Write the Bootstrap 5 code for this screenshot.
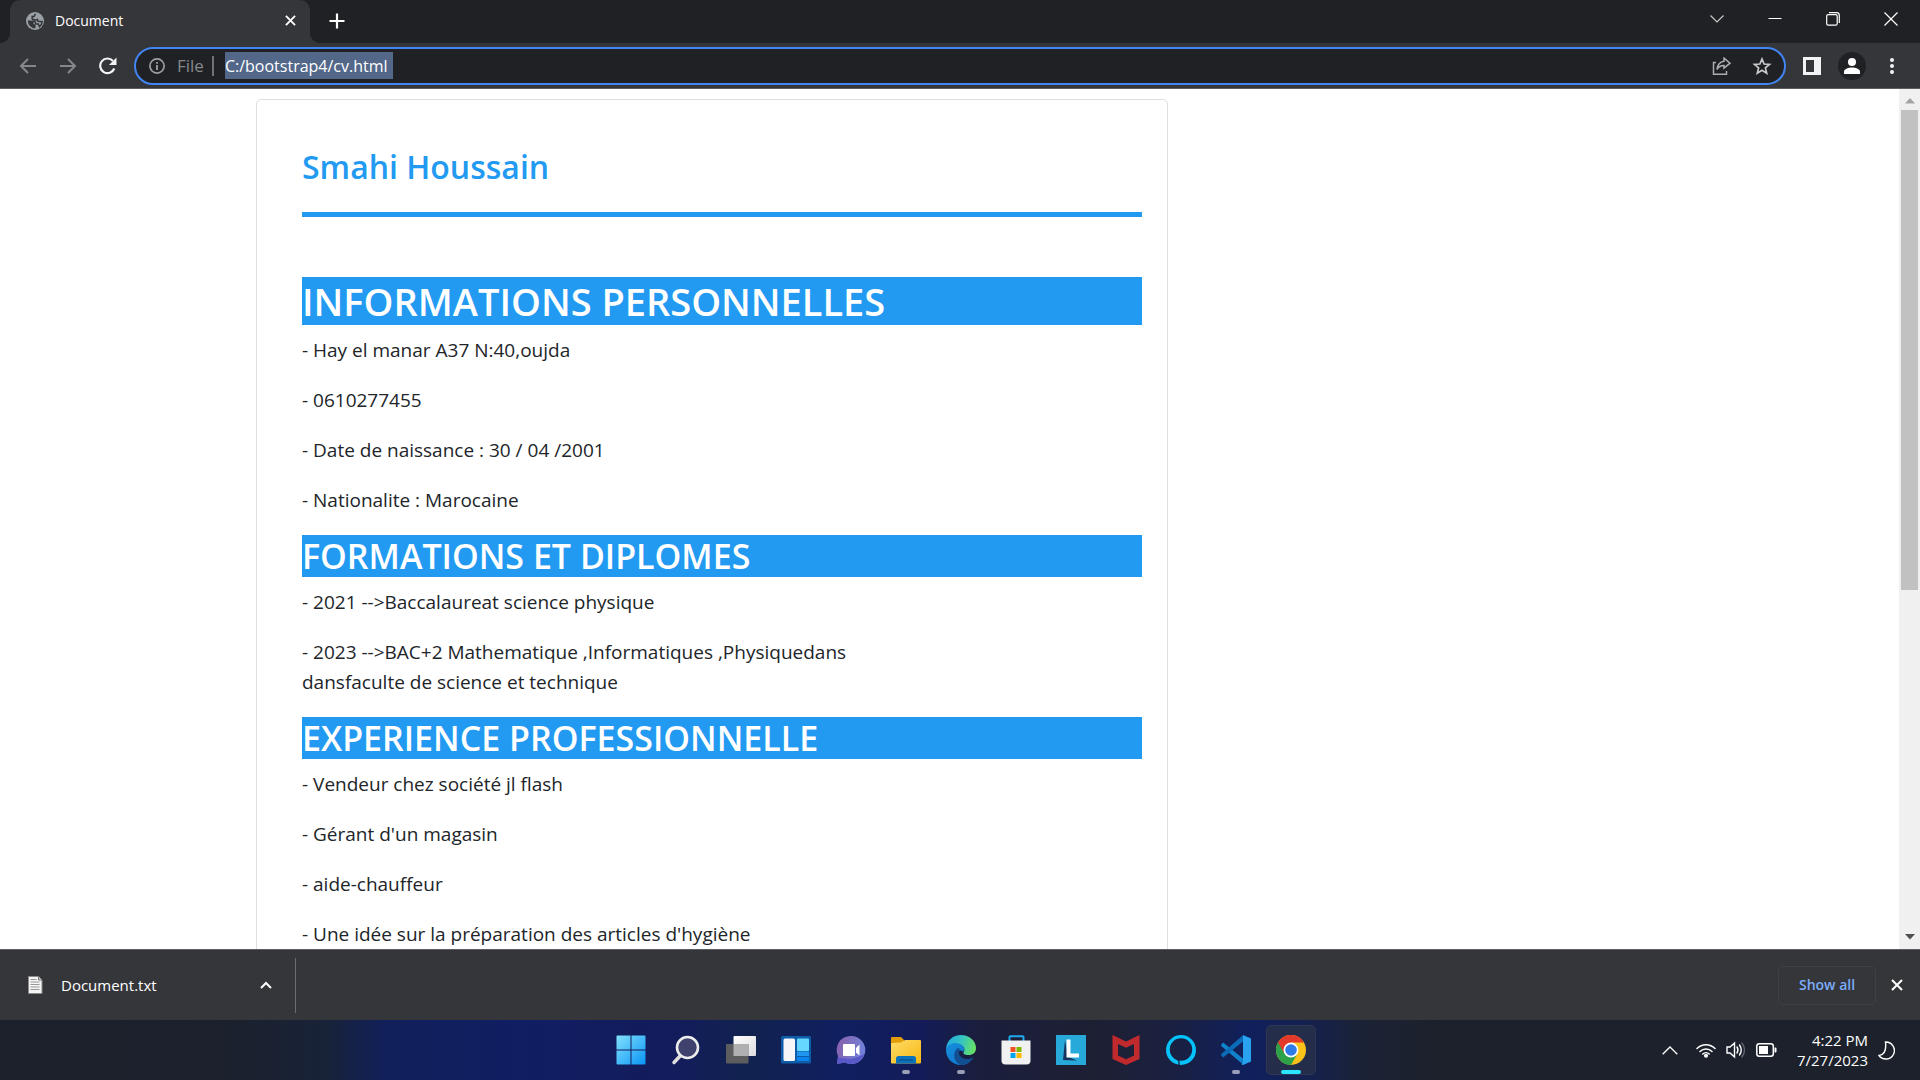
<!DOCTYPE html>
<html lang="fr">
<head>
<meta charset="utf-8">
<meta name="viewport" content="width=device-width, initial-scale=1">
<title>Document</title>
<link href="https://cdn.jsdelivr.net/npm/bootstrap@5.3.0/dist/css/bootstrap.min.css" rel="stylesheet">
<style>
  body { font-family: "Open Sans", "Noto Sans", sans-serif; font-size: 15px; line-height: 20px; }
  svg { display: block; flex: none; }
  .plain { background: none; border: 0; padding: 0; color: inherit; display: flex; align-items: center; justify-content: center; flex: none; }

  /* tab strip */
  .tabstrip { background: #202124; height: 43px; color: #fff; padding-left: 10px; font-size: 14px; }
  .tab-item { background: #35363a; width: 300px; height: 43px; border-radius: 10px 10px 0 0; padding: 0 8px 2px 16px; gap: 11px; position: relative; }
  .tab-item::before, .tab-item::after { content: ""; position: absolute; bottom: 0; width: 10px; height: 10px; }
  .tab-item::before { left: -10px; background: radial-gradient(circle at 0 0, transparent 10px, #35363a 10px); }
  .tab-item::after { right: -10px; background: radial-gradient(circle at 100% 0, transparent 10px, #35363a 10px); }
  .tab-close { width: 24px; height: 24px; }
  .tab-new { width: 34px; height: 42px; margin-left: 10px; }
  .win-btn { width: 58px; height: 37px; }

  /* toolbar */
  .toolbar { background: #35363a; height: 46px; padding: 0 8px; border-bottom: 1px solid #5c5d60; color: #f1f3f4; }
  .tool-btn { width: 40px; height: 40px; }
  .dim { color: #85878a; }
  .omnibox { background: #202124; border: 2px solid #4285f4; border-radius: 19px; height: 38px; margin: 0 6px; padding: 0 2px 0 13px; color: #9aa0a6; }
  .scheme { font-size: 17px; margin: 0 8px 0 12px; color: #85888c; }
  .scheme-rule { width: 2px; height: 20px; background: #6f7276; margin-right: 11px; }
  .address { background: #536789; color: #fff; border: 0; padding: 0; width: 168px; height: 27px; font-size: 16px; outline: 0; }

  /* document */
  .viewport-area { min-height: 0; background: #fff; overflow: hidden; }
  .doc { --bs-gutter-x: 38px; max-width: 1425px; padding-top: 10px; }
  .doc .row { --bs-gutter-x: 38px; }
  .cv { border: 1px solid #dfdfdf; border-radius: 5px; padding: 46px 25px 48px 45px; color: #212529; font-size: 19px; line-height: 30px; }
  .cv p { margin-bottom: 20px; }
  .cv h1, .cv h2, .cv h3 { font-weight: 600; margin: 0; }
  .cv h1 { color: #229af2; font-size: 32px; line-height: 42px; }
  .cv hr { height: 5px; border: 0; background: #229af2; opacity: 1; margin: 24px 0 60px; }
  .cv h2, .cv h3 { background: #229af2; color: #fff; margin-bottom: 10px; }
  .cv h2 { font-size: 38px; line-height: 48px; }
  .cv h3 { font-size: 34px; line-height: 42px; }
  .scroll-track { width: 21px; background: #f0f0f0; padding: 9px 0; }
  .scroll-thumb { width: 17px; height: 57%; background: #c1c1c1; margin-top: 6px; }

  /* download shelf */
  .shelf { background: #35363a; height: 71px; border-top: 1px solid #5c5d60; color: #fff; padding: 0 11px 0 28px; }
  .shelf-file { width: 250px; gap: 18px; }
  .shelf-rule { width: 1px; height: 55px; background: #6b6c6f; margin-left: 17px; }
  .show-all { width: 98px; height: 39px; border: 1px solid #3f4043; border-radius: 5px; color: #7cacf8; font-size: 14px; font-weight: 600; margin-right: 9px; }

  /* taskbar */
  .taskbar { height: 60px; display: grid; grid-template-columns: 1fr auto 1fr; align-items: center; color: #fff;
    background: linear-gradient(90deg, #1d212b 0, #1b212d 12%, #182238 17%, #11205a 20%, #101e62 27%, #131c5c 35%, #11224f 39%, #101f60 44%, #131c58 48%, #1b1e3c 51%, #1d2033 57%, #1a2040 61%, #10205c 65%, #152150 68%, #1b2235 71%, #1c212b 75%, #1c212b 100%); }
  .apps { gap: 5px; padding-left: 2px; }
  .app { width: 50px; height: 50px; border-radius: 5px; position: relative; }
  .app.running::after { content: ""; position: absolute; bottom: 1px; left: 21px; width: 8px; height: 4px; border-radius: 2px; background: #9a9fb8; }
  .app.current { background: #242e4b; border: 1px solid #2d3753; }
  .app.current::after { bottom: 0; left: 14px; width: 20px; background: #29e5ff; }
  .tray { gap: 10px; padding-right: 25px; }
  .clock { text-align: right; margin-left: 10px; }
</style>
</head>
<body class="vh-100 d-flex flex-column overflow-hidden">

<header>
  <div class="tabstrip d-flex align-items-start">
    <div class="tab-item d-flex align-items-center">
      <svg width="18" height="18" viewBox="0 0 18 18"><circle cx="9" cy="9" r="9" fill="#9aa0a6"/><path d="M1.800 8.500H5l2.500 1.200V12l2 .5v3.800C5.500 16.500 1.800 13 1.800 8.500z" fill="#35363a"/><path d="M9.500 1.800L8 4.500H6.200V7L9 8.200l2.500-.7.500 1.800 4.200.4C16 12 15 13.500 13.500 14.700L12.300 12H9.800l-.5-2L6 9" fill="none" stroke="#35363a" stroke-width="1.500"/></svg>
      <span class="flex-grow-1">Document</span>
      <button class="plain tab-close" aria-label="Fermer l'onglet"><svg width="11" height="11" viewBox="0 0 12 12" stroke="#fff" stroke-width="2"><path d="M1 1l10 10M11 1L1 11"/></svg></button>
    </div>
    <button class="plain tab-new" aria-label="Nouvel onglet"><svg width="16" height="16" viewBox="0 0 16 16" stroke="#fff" stroke-width="2.200"><path d="M8 .5v15M.5 8h15"/></svg></button>
    <div class="d-flex ms-auto">
      <button class="plain win-btn" aria-label="Rechercher dans les onglets"><svg width="14" height="8" viewBox="0 0 14 8" fill="none" stroke="#c8c9ca" stroke-width="1.200"><path d="M.5 .5L7 7 13.500 .5"/></svg></button>
      <button class="plain win-btn" aria-label="Réduire"><svg width="14" height="1" viewBox="0 0 14 1"><path d="M.5 0h13v1H.5z" fill="#fff"/></svg></button>
      <button class="plain win-btn" aria-label="Restaurer"><svg width="14" height="14" viewBox="0 0 14 14" fill="none" stroke="#fff" stroke-width="1.200"><rect x=".7" y="2.700" width="10.500" height="10.500" rx="1.500"/><path d="M3 .7h7.500a2.800 2.800 0 0 1 2.800 2.800V11"/></svg></button>
      <button class="plain win-btn" aria-label="Fermer"><svg width="14" height="14" viewBox="0 0 14 14" stroke="#fff" stroke-width="1.200"><path d="M.5 .5l13 13M13.500 .5l-13 13"/></svg></button>
    </div>
  </div>

  <div class="toolbar d-flex align-items-center">
    <button class="plain tool-btn dim" aria-label="Précédent"><svg width="18" height="18" viewBox="0 0 18 18" fill="none" stroke="currentColor" stroke-width="2"><path d="M17 9H2M9 2L2 9l7 7"/></svg></button>
    <button class="plain tool-btn dim" aria-label="Suivant"><svg width="18" height="18" viewBox="0 0 18 18" fill="none" stroke="currentColor" stroke-width="2"><path d="M1 9h15M9 2l7 7-7 7"/></svg></button>
    <button class="plain tool-btn" aria-label="Actualiser"><svg width="18" height="18" viewBox="0 0 18 18"><path d="M15.300 11.500A7.300 7.300 0 1 1 14 4" fill="none" stroke="currentColor" stroke-width="2.200"/><path d="M17.500 .5V8H10z" fill="currentColor"/></svg></button>
    <div class="omnibox d-flex align-items-center flex-grow-1">
      <svg width="16" height="16" viewBox="0 0 16 16"><circle cx="8" cy="8" r="7.100" fill="none" stroke="currentColor" stroke-width="1.700"/><path d="M7.100 7h1.800v5H7.100zM7.100 4h1.800v1.800H7.100z" fill="currentColor"/></svg>
      <label class="scheme" for="address">File</label>
      <span class="scheme-rule"></span>
      <input class="address" id="address" type="text" value="C:/bootstrap4/cv.html">
      <button class="plain tool-btn ms-auto" aria-label="Partager"><svg width="20" height="18" viewBox="0 0 20 18" fill="none" stroke="#aaacaf" stroke-width="1.500"><path d="M4 5.500H1.500v11.700h13V14"/><path d="M12 1.200l6 5-6 5V8.500c-3.500 0-5.500 1.200-7 4 .3-4.500 2.500-7.500 7-8.300z"/></svg></button>
      <button class="plain tool-btn" aria-label="Ajouter aux favoris"><svg width="20" height="18" viewBox="0 0 20 18" fill="none" stroke="#c8cacc" stroke-width="1.700"><path d="M10 2l2.100 5 5.400.4-4.100 3.500 1.300 5.300L10 13.300l-4.700 2.900 1.300-5.300-4.100-3.500 5.400-.4z"/></svg></button>
    </div>
    <button class="plain tool-btn" aria-label="Panneau latéral"><svg width="18" height="18" viewBox="0 0 18 18"><path d="M0 0h18v18H0zM3 3v12h8V3z" fill="#f1f3f4" fill-rule="evenodd"/></svg></button>
    <button class="plain tool-btn" aria-label="Profil"><svg width="28" height="28" viewBox="0 0 28 28"><circle cx="14" cy="14" r="14" fill="#202124"/><circle cx="14" cy="10" r="4" fill="#fff"/><path d="M6 22v-2.500C6 17 11 15.500 14 15.500s8 1.500 8 4V22z" fill="#fff"/></svg></button>
    <button class="plain tool-btn" aria-label="Menu"><svg width="4" height="18" viewBox="0 0 4 18" fill="#f1f3f4"><circle cx="2" cy="3" r="2"/><circle cx="2" cy="9" r="2"/><circle cx="2" cy="15" r="2"/></svg></button>
  </div>
</header>

<div class="viewport-area d-flex flex-grow-1">
  <main class="flex-grow-1">
    <div class="container doc">
      <div class="row">
        <div class="col-8">
          <article class="cv">
            <h1>Smahi Houssain</h1>
            <hr>
            <h2>INFORMATIONS PERSONNELLES</h2>
            <p>- Hay el manar A37 N:40,oujda</p>
            <p>- 0610277455</p>
            <p>- Date de naissance : 30 / 04 /2001</p>
            <p>- Nationalite : Marocaine</p>
            <h3>FORMATIONS ET DIPLOMES</h3>
            <p>- 2021 --&gt;Baccalaureat science physique</p>
            <p>- 2023 --&gt;BAC+2 Mathematique ,Informatiques ,Physiquedans<br>dansfaculte de science et technique</p>
            <h3>EXPERIENCE PROFESSIONNELLE</h3>
            <p>- Vendeur chez société jl flash</p>
            <p>- Gérant d'un magasin</p>
            <p>- aide-chauffeur</p>
            <p>- Une idée sur la préparation des articles d'hygiène</p>
          </article>
        </div>
      </div>
    </div>
  </main>
  <div class="scroll-track d-flex flex-column align-items-center">
    <svg width="10" height="6" viewBox="0 0 10 6"><path d="M5 0l5 5.500H0z" fill="#a3a3a3"/></svg>
    <div class="scroll-thumb"></div>
    <svg class="mt-auto" width="10" height="6" viewBox="0 0 10 6"><path d="M5 5.500L10 0H0z" fill="#505050"/></svg>
  </div>
</div>

<footer>
  <div class="shelf d-flex align-items-center">
    <div class="shelf-file d-flex align-items-center">
      <svg width="15" height="18" viewBox="0 0 15 18"><path d="M.5 .5h10l3.500 3.500v13.500H.5z" fill="#f4f4f4" stroke="#8b8b8b"/><path d="M10.500 .5V4H14" fill="#ccc" stroke="#777"/><path d="M2.500 3.500h6M2.500 6h9M2.500 8.500h9M2.500 11h9M2.500 13.500h9" stroke="#999"/></svg>
      <span>Document.txt</span>
      <button class="plain tab-close ms-auto" aria-label="Options du fichier"><svg width="12" height="8" viewBox="0 0 12 8" fill="none" stroke="#fff" stroke-width="2"><path d="M1 7l5-5 5 5"/></svg></button>
    </div>
    <span class="shelf-rule"></span>
    <button class="plain show-all ms-auto">Show all</button>
    <button class="plain tab-close" aria-label="Fermer la barre"><svg width="12" height="12" viewBox="0 0 12 12" stroke="#fff" stroke-width="2"><path d="M1 1l10 10M11 1L1 11"/></svg></button>
  </div>

  <div class="taskbar">
    <div></div>
    <nav class="apps d-flex" aria-label="Applications">
      <button class="plain app" aria-label="Démarrer"><svg width="30" height="30" viewBox="0 0 30 30"><defs><linearGradient id="gWin" x1="0" y1="0" x2="1" y2="1"><stop stop-color="#83e1fb"/><stop offset="1" stop-color="#0894f5"/></linearGradient></defs><path d="M1.500.5H14.500v14H.5v-13a1 1 0 0 1 1-1zM15.500.5h13a1 1 0 0 1 1 1v13h-14zM.5 15.500h14v14h-13a1 1 0 0 1-1-1zM15.500 15.500h14v13a1 1 0 0 1-1 1h-13z" fill="url(#gWin)"/></svg></button>
      <button class="plain app" aria-label="Rechercher"><svg width="30" height="30" viewBox="0 0 30 30"><path d="M10 20l-7 7.500" stroke="#dedede" stroke-width="3.500" stroke-linecap="round"/><circle cx="16.500" cy="12.500" r="10.500" fill="#3f426c" stroke="#ececec" stroke-width="2.600"/></svg></button>
      <button class="plain app" aria-label="Affichage des tâches"><svg width="30" height="30" viewBox="0 0 30 30"><defs><linearGradient id="gTv" x1="0" y1="0" x2="1" y2="1"><stop stop-color="#fff"/><stop offset="1" stop-color="#dcdcdc"/></linearGradient></defs><rect x="7.500" y="1" width="22.500" height="20" rx="1" fill="url(#gTv)"/><rect y="9" width="22.500" height="19.500" rx="1" fill="#5d5d5f"/><path d="M7.500 9h15v12h-15z" fill="#b0b0b2"/></svg></button>
      <button class="plain app" aria-label="Widgets"><svg width="30" height="30" viewBox="0 0 30 30"><rect y="1" width="30" height="27.500" rx="1.500" fill="#0f5ca8"/><rect x="2.500" y="3.500" width="11.500" height="22.500" rx="1.500" fill="#f5f6f8"/><rect x="16" y="3.500" width="12" height="12.500" rx="1" fill="#66d8ff"/><path d="M16 16.500h12V21H16z" fill="#2196f0"/><path d="M16 22h12v4H16z" fill="#0a84ee"/></svg></button>
      <button class="plain app" aria-label="Chat"><svg width="30" height="30" viewBox="0 0 30 30"><defs><linearGradient id="gChat" x1="0" y1="0" x2="1" y2=".3"><stop stop-color="#8a5fa8"/><stop offset="1" stop-color="#7180d8"/></linearGradient></defs><path d="M15 1a14 14 0 1 1-6 26.500L1 29l1-8A14 14 0 0 1 15 1z" fill="url(#gChat)"/><path d="M1 29l1-7c8 3 19 2 26-3-2 6-7 10-13 10-2 0-4-.3-6-1.500z" fill="#5a58c8"/><rect x="7" y="9" width="12" height="12" rx="1" fill="#fff"/><path d="M20 13l3.500-3.500v11L20 17.500z" fill="#fff"/></svg></button>
      <button class="plain app running" aria-label="Explorateur"><svg width="30" height="30" viewBox="0 0 30 30"><defs><linearGradient id="gFold" x1="0" y1="0" x2="1" y2="1"><stop stop-color="#ffdc6a"/><stop offset="1" stop-color="#f7b80f"/></linearGradient></defs><path d="M0 10V3q0-1 1-1h9l3 3v5z" fill="#e39c0a"/><path d="M0 8l10-.5 4-2.500h15q1 0 1 1v21.500q0 1-1 1H1q-1 0-1-1z" fill="url(#gFold)"/><path d="M5 28.500v-5q0-2.500 2.500-2.500h15q2.500 0 2.500 2.500v5z" fill="#0c72bd"/><path d="M8 25h14" stroke="#06487f"/></svg></button>
      <button class="plain app running" aria-label="Edge"><svg width="30" height="30" viewBox="0 0 30 30"><defs><linearGradient id="gE1" x1="0" y1=".3" x2="1" y2=".5"><stop stop-color="#24a9e2"/><stop offset=".5" stop-color="#35c4c0"/><stop offset="1" stop-color="#68e264"/></linearGradient><linearGradient id="gE2" x1="0" y1="0" x2="1" y2="1"><stop stop-color="#1690dc"/><stop offset="1" stop-color="#0f6fcb"/></linearGradient></defs><path d="M0 14C1 5 7 0 15 0c8.500 0 15 6 15 13 0 4.500-3 7-7.500 7-4 0-5.500-1.200-5-2.500 1-1.500 1.200-3 .5-4.500C16 9 10 7.500 0 14z" fill="url(#gE1)"/><path d="M0 15C1 10 5 8 9 8c5 0 9 2.500 9 6 0 1.500-.5 2.500-1 3-3-4-8 1-4 6 3 4 8 3.500 14-.5C24 27.500 20 30 15 30 6 30 0 23 0 15z" fill="url(#gE2)"/><path d="M12 13c-5 3-5.500 13 2 16.900 5.500.6 10-2.200 13-7.400-3 1.500-6 2-8.500 1.300-5-1.500-7-5.800-4.500-9.800z" fill="#114f92"/></svg></button>
      <button class="plain app" aria-label="Microsoft Store"><svg width="30" height="32" viewBox="0 0 30 32"><path d="M8.500 8V3q0-.8.8-.8h12.400q.8 0 .8.800v5" fill="none" stroke="#1faaf0" stroke-width="2"/><path d="M.5 6.500h29v20q0 4-4 4h-21q-4 0-4-4z" fill="#f1f1f1"/><path fill="#f25022" d="M9.500 13h5v5h-5z"/><path fill="#7fba00" d="M15.500 13h5v5h-5z"/><path fill="#00a4ef" d="M9.500 19h5v5h-5z"/><path fill="#ffb900" d="M15.500 19h5v5h-5z"/></svg></button>
      <button class="plain app" aria-label="Lenovo"><svg width="30" height="30" viewBox="0 0 30 30"><path d="M0 0h30v30H0z" fill="#27aad9"/><path d="M9 5L7 25l14 .5-9-3.500z" fill="#17345f"/><path d="M10.500 4.500h4v14H23v4H10.500z" fill="#fff"/></svg></button>
      <button class="plain app" aria-label="McAfee"><svg width="30" height="30" viewBox="0 0 30 30"><path d="M1.500 0L15 6.500 28.500 0v24L15 30 1.500 24zM7 9v11.500l8 3.800 8-3.800V9l-8 3.800z" fill="#c12a2c" fill-rule="evenodd"/></svg></button>
      <button class="plain app" aria-label="Alexa"><svg width="30" height="30" viewBox="0 0 30 30"><path d="M15 0a15 15 0 1 0 0 30a15 15 0 1 0 0-30zM15 3.300a11.200 11.200 0 1 1 0 22.400a11.200 11.200 0 1 1 0-22.400z" fill="#05c3fa" fill-rule="evenodd"/><path d="M11.500 24.800q1.500.7 1.500 2v3.500" fill="none" stroke="#1b2038" stroke-width="1.200"/></svg></button>
      <button class="plain app running" aria-label="Visual Studio Code"><svg width="30" height="30" viewBox="0 0 30 30"><path d="M2.200 7.500L22 23.500v6L.5 11.200q-.8-1 0-2z" fill="#1182cc"/><path d="M2.200 22.500L22 6.500V.3L.5 18.800q-.8 1 0 2z" fill="#0a6cb8"/><path d="M22 0l8 3.500v23L22 30q-1 0-1.500-.8L22 28z" fill="#29a2f0"/></svg></button>
      <button class="plain app running current" aria-label="Chrome"><svg width="30" height="30" viewBox="0 0 30 30"><circle cx="15" cy="15" r="15" fill="#fbc21a"/><path d="M2 7.500A15 15 0 0 0 15 30l6.500-11.500L15 15z" fill="#2da04a"/><path d="M2 7.500A15 15 0 0 1 28 7.500H15l-6.500 11z" fill="#e2392b"/><circle cx="15" cy="15" r="7.500" fill="#fff"/><circle cx="15" cy="15" r="5.800" fill="#2f7be8"/></svg></button>
    </nav>
    <div class="tray d-flex align-items-center justify-content-end">
      <svg class="me-2" width="16" height="9" viewBox="0 0 16 9" fill="none" stroke="#fff" stroke-width="1.300"><path d="M.7 8.300L8 1l7.300 7.300"/></svg>
      <svg width="20" height="16" viewBox="0 0 20 16" fill="none" stroke="#fff" stroke-width="1.500" stroke-linecap="round"><path d="M1 6.500a12.700 12.700 0 0 1 18 0M4 9.500a8.500 8.500 0 0 1 12 0M6.800 12a4.600 4.600 0 0 1 6.400 0"/><circle cx="10" cy="13.800" r="1.300" fill="#fff"/></svg>
      <svg width="20" height="18" viewBox="0 0 20 18" fill="none" stroke="#fff" stroke-width="1.400" stroke-linecap="round"><path d="M1 6h3l4.500-4v14L4 12H1zM11 6q2 3 0 6M13.500 4q3.500 5 0 10"/><path d="M16 2q5 7 0 14" stroke="#5e636d"/></svg>
      <svg width="21" height="14" viewBox="0 0 21 14"><rect x=".8" y=".8" width="16.500" height="12.400" rx="2.500" fill="none" stroke="#fff" stroke-width="1.500"/><path d="M3 3h9v8H3zM18.500 4.500h1q1 0 1 1v3q0 1-1 1h-1z" fill="#fff"/></svg>
      <div class="clock">4:22 PM<br>7/27/2023</div>
      <svg width="17" height="19" viewBox="0 0 17 19" fill="none" stroke="#fff" stroke-width="1.400"><path d="M7.500 1A8.500 8.500 0 1 1 1 14.500Q9 13.500 7.500 1z"/></svg>
    </div>
  </div>
</footer>

<script src="https://cdn.jsdelivr.net/npm/bootstrap@5.3.0/dist/js/bootstrap.bundle.min.js"></script>
</body>
</html>
